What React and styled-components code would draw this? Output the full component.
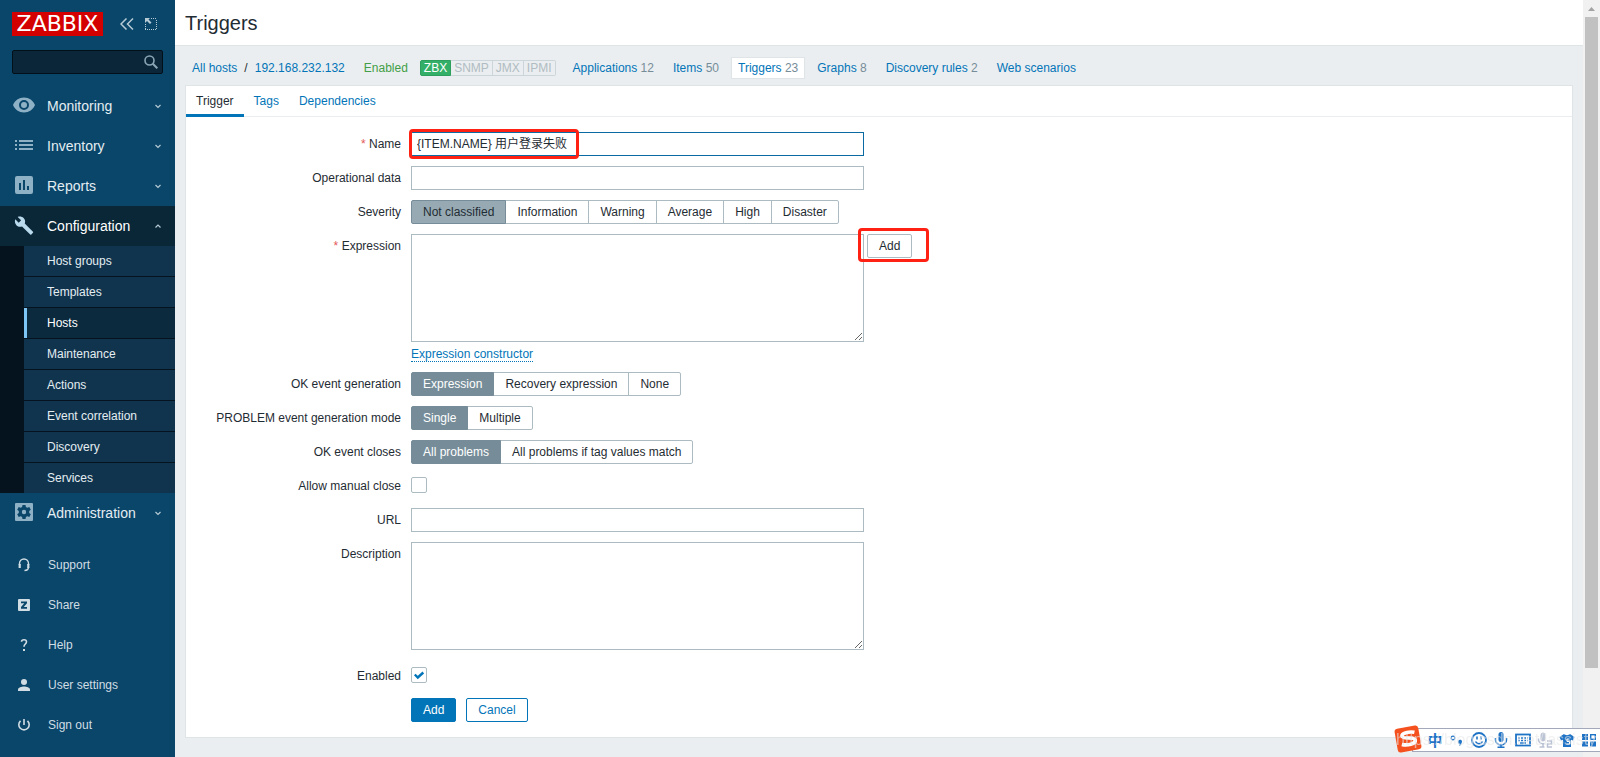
import React from 'react';
import styled, { createGlobalStyle, css } from 'styled-components';

const GlobalStyle = createGlobalStyle`
  * {
    box-sizing: border-box;
  }

  body {
    margin: 0;
    background: #ebeef0;
    color: #1f2c33;
    font: 12px/24px "Liberation Sans", "Noto Sans CJK SC", sans-serif;
  }

  ul {
    margin: 0;
    padding: 0;
    list-style: none;
  }

  a {
    color: #0275b8;
    text-decoration: none;
  }

  input, textarea, button {
    margin: 0;
    font: inherit;
    color: inherit;
  }

  svg {
    display: block;
  }
`;

const Page = styled.div`
  display: flex;
  min-height: 100vh;
`;

/* sidebar */

const Sidebar = styled.aside`
  flex: none;
  width: 175px;
  background: #0a466a;
`;

const LogoRow = styled.div`
  display: flex;
  align-items: center;
  padding: 12px 0 0 12px;
`;

const Logo = styled.a`
  width: 91px;
  height: 24px;
  background: #d40000;
  color: #fff;
  font: 22px/24px "DejaVu Sans", sans-serif;
  text-align: center;
`;

const IconButton = styled.button`
  margin-left: ${({ $gap }) => $gap}px;
  padding: 0;
  border: 0;
  background: none;
  color: #b7cbd6;
`;

const Search = styled.form`
  display: flex;
  align-items: center;
  height: 24px;
  margin: 14px 12px 12px;
  padding-right: 4px;
  border: 1px solid #02101a;
  border-radius: 2px;
  background: #0a2638;
  color: #8ba7b7;

  input {
    flex: 1;
    min-width: 0;
    border: 0;
    background: none;
    outline: 0;
  }
`;

const MenuLink = styled.a`
  display: flex;
  align-items: center;
  height: 40px;
  padding: 0 13px 0 12px;
  background: ${({ $open }) => ($open ? '#0a2738' : 'transparent')};
  color: ${({ $open }) => ($open ? '#fff' : '#e4edf2')};
  font-size: 14px;

  span {
    flex: 1;
    margin-left: 11px;
  }

  .icon {
    color: ${({ $open }) => ($open ? '#b9d9ec' : '#8fb1c6')};
  }
`;

const SubMenu = styled.ul`
  padding-left: 24px;
  background: #04131d;

  li + li {
    border-top: 1px solid #04131d;
  }
`;

const SubLink = styled.a`
  display: block;
  padding-left: 20px;
  border-left: 3px solid ${({ $active }) => ($active ? '#7cc5f5' : 'transparent')};
  background: ${({ $active }) => ($active ? '#0b2a3e' : '#10344e')};
  background-clip: ${({ $active }) => ($active ? 'padding-box' : 'border-box')};
  color: ${({ $active }) => ($active ? '#fff' : '#e4edf2')};
  line-height: 30px;
`;

const UserMenu = styled.ul`
  padding-top: 12px;
`;

const UserLink = styled.a`
  display: flex;
  align-items: center;
  height: 40px;
  padding-left: 15px;
  color: #d0dde4;

  svg {
    margin-right: 15px;
  }
`;

/* content */

const Content = styled.div`
  flex: 1;
  min-width: 0;
`;

const Header = styled.header`
  height: 46px;
  padding: 0 10px;
  border-bottom: 1px solid #dfe4e7;
  background: #fff;

  h1 {
    margin: 0;
    font-size: 20px;
    font-weight: normal;
    line-height: 46px;
  }
`;

const HostNav = styled.nav`
  display: flex;
  align-items: center;
  height: 39px;
  padding: 5px 17px 0;
  white-space: nowrap;
  line-height: 20px;
`;

const Crumb = styled.div`
  display: flex;
  gap: 7px;
  margin-right: 19px;
`;

const Status = styled.span`
  margin-right: 12px;
  color: #429e47;
`;

const Interfaces = styled.div`
  display: flex;
  margin-right: 10px;
  border-radius: 2px;
  line-height: 14px;

  span {
    padding: 0 3px;
    border: 1px solid #ccd5d9;
    color: #b0bcc2;
  }

  span + span {
    border-left-width: 0;
  }

  span:first-child {
    border-color: #2f9f5e;
    border-radius: 2px 0 0 2px;
    background: #34af67;
    color: #fff;
  }

  span:last-child {
    border-radius: 0 2px 2px 0;
  }
`;

const NavLink = styled.a`
  margin-right: 5px;
  padding: 0 6px;
  border: 1px solid ${({ $active }) => ($active ? '#dfe4e7' : 'transparent')};
  background: ${({ $active }) => ($active ? '#fff' : 'none')};

  sup {
    color: #768d99;
    font-size: 12px;
    line-height: 1;
    vertical-align: baseline;
  }
`;

const Panel = styled.main`
  margin: 0 10px;
  border: 1px solid #dfe4e7;
  background: #fff;
`;

const Tabs = styled.ul`
  display: flex;
  height: 31px;
  border-bottom: 1px solid #ebeef0;
`;

const Tab = styled.a`
  display: block;
  height: 31px;
  padding: 0 10px;
  border-bottom: 3px solid ${({ $active }) => ($active ? '#0275b8' : 'transparent')};
  color: ${({ $active }) => ($active ? '#1f2c33' : '#0275b8')};
  line-height: 30px;
`;

const Form = styled.form`
  display: flex;
  flex-direction: column;
  gap: 10px;
  padding: 15px 0;
`;

const FormRow = styled.div`
  display: flex;
  gap: 10px;
  min-height: 24px;
`;

const Label = styled.label`
  flex: none;
  width: 215px;
  text-align: right;

  &::before {
    content: ${({ $required }) => ($required ? '"* "' : 'none')};
    color: #e45959;
  }
`;

const Field = styled.div`
  position: relative;
  flex: 1;
  min-width: 0;
`;

const control = css`
  display: block;
  width: 453px;
  max-width: 100%;
  border: 1px solid #acbbc2;
  border-radius: 0;
  background: #fff;
  outline: 0;
`;

const TextInput = styled.input`
  ${control}
  height: 24px;
  padding: 0 5px;
  border-color: ${({ $focused }) => ($focused ? '#0a6aa1' : '#acbbc2')};
`;

const TextArea = styled.textarea`
  ${control}
  height: 108px;
  margin-bottom: 4px;
  padding: 4px 5px;
`;

const Split = styled.div`
  display: flex;
  align-items: flex-start;
  gap: 3px;
`;

const Button = styled.button`
  height: 24px;
  padding: 0 11px;
  border: 1px solid ${({ $kind }) => ($kind === 'plain' ? '#acbbc2' : '#0275b8')};
  border-radius: 2px;
  background: ${({ $kind }) => ($kind === 'primary' ? '#0275b8' : '#fff')};
  color: ${({ $kind }) => ({ plain: '#1f2c33', primary: '#fff', alt: '#0275b8' }[$kind])};
  line-height: 22px;
`;

const Actions = styled.div`
  display: flex;
  gap: 10px;
`;

const Constructor = styled.a`
  display: block;
  width: fit-content;
  height: 16px;
  border-bottom: 1px dotted #0275b8;
  line-height: 17px;
`;

const Segments = styled.ul`
  display: flex;

  li + li {
    margin-left: -1px;
  }

  input {
    position: absolute;
    opacity: 0;
  }

  span {
    display: block;
    height: 24px;
    padding: 0 11px;
    border: 1px solid #acbbc2;
    line-height: 22px;
    white-space: nowrap;
  }

  li:first-child span {
    border-radius: 2px 0 0 2px;
  }

  li:last-child span {
    border-radius: 0 2px 2px 0;
  }

  input:checked + span {
    position: relative;
    border-color: #768d99;
    background: ${({ $severity }) => ($severity ? '#97aab3' : '#768d99')};
    color: ${({ $severity }) => ($severity ? '#1f2c33' : '#fff')};
  }
`;

const CheckWrap = styled.span`
  display: grid;
  width: 16px;
  height: 24px;
  padding-top: 3px;
  align-content: start;

  input, svg {
    grid-area: 1 / 1;
  }

  input {
    appearance: none;
    width: 16px;
    height: 16px;
    border: 1px solid #acbbc2;
    border-radius: 2px;
    background: #fff;
  }

  svg {
    visibility: hidden;
    z-index: 1;
    pointer-events: none;
  }

  input:checked + svg {
    visibility: visible;
  }
`;

/* red marker drawn over a control */
const Marker = styled.span`
  position: absolute;
  top: ${({ $top }) => $top}px;
  left: ${({ $left }) => $left}px;
  width: ${({ $width }) => $width}px;
  height: ${({ $height }) => $height}px;
  border: 3px solid #ff2113;
  border-radius: 4px;
  pointer-events: none;
`;

const Anchor = styled.div`
  position: relative;
  display: flex;
`;

/* page scrollbar */

const ScrollTrack = styled.div`
  flex: none;
  display: flex;
  flex-direction: column;
  align-items: center;
  width: 17px;
  background: #f1f1f1;

  svg {
    flex: none;
  }
`;

const ScrollThumb = styled.div`
  width: 13px;
  height: 86%;
  background: #c1c1c1;
`;

/* input method bar */

const ImeBar = styled.div`
  position: fixed;
  right: 0;
  bottom: 5px;
  display: flex;
  align-items: center;
  gap: 6px;
  height: 24px;
  padding: 0 3px 0 14px;
  border: 1px solid #a3a9bb;
  border-right: 0;
  background: #fff;
  color: #1e73c6;
`;

const ImeLogo = styled.svg`
  position: absolute;
  left: -20px;
  bottom: -2px;
`;

const ImeText = styled.span`
  width: 16px;
  font: bold 15px/16px "Noto Sans CJK SC", sans-serif;
  text-align: center;
`;

const Watermark = styled.span`
  position: absolute;
  left: -17px;
  color: rgba(232, 232, 232, 0.6);
  font-size: 16px;
  white-space: nowrap;
`;

const MENU_ICONS = {
  eye: (
    <path
      fillRule="evenodd"
      d="M12 4.500C7 4.500 2.700 7.600 1 12c1.700 4.400 6 7.500 11 7.500s9.300-3.100 11-7.500C21.300 7.600 17 4.500 12 4.500zM12 17a5 5 0 1 1 0-10 5 5 0 0 1 0 10zm0-8a3 3 0 1 0 0 6 3 3 0 0 0 0-6z"
    />
  ),
  list: <path d="M3 7h2v2H3zm4 0h14v2H7zM3 11h2v2H3zm4 0h14v2H7zM3 15h2v2H3zm4 0h14v2H7z" />,
  chart: (
    <path
      fillRule="evenodd"
      d="M5 3h14a2 2 0 0 1 2 2v14a2 2 0 0 1-2 2H5a2 2 0 0 1-2-2V5a2 2 0 0 1 2-2zm2 7v7h2v-7zm4-3v10h2V7zm4 6v4h2v-4z"
    />
  ),
  wrench: (
    <path
      transform="translate(1 1) scale(.92)"
      d="M21.700 19.300l-8.900-8.900c.8-2 .4-4.400-1.300-6C9.800 2.600 7.200 2.300 5.100 3.200l3.700 3.700-2.600 2.600-3.700-3.700c-.9 2.100-.5 4.700 1.200 6.400 1.700 1.700 4 2.100 6.100 1.300l8.900 8.800c.3.300.9.300 1.200 0l1.800-1.800c.3-.3.300-.9 0-1.200z"
    />
  ),
  gear: (
    <path
      fillRule="evenodd"
      d="M4 3h16a1 1 0 0 1 1 1v16a1 1 0 0 1-1 1H4a1 1 0 0 1-1-1V4a1 1 0 0 1 1-1zm6.500 2l-.4 2-1.400.8-2-.7-1.500 2.600L6.800 11v2l-1.600 1.300 1.500 2.600 2-.7 1.400.8.4 2h3l.4-2 1.400-.8 2 .7 1.500-2.600-1.600-1.300v-2l1.600-1.300-1.500-2.600-2 .7-1.400-.8-.4-2zM12 9.800a2.200 2.200 0 1 1 0 4.400 2.200 2.200 0 0 1 0-4.400z"
    />
  ),
};

const USER_ICONS = {
  support: (
    <g fill="none" stroke="currentColor">
      <path d="M4.500 9V7.500a4.500 4.500 0 0 1 9 0V9" strokeWidth="1.400" />
      <path d="M4.700 8v4M13.300 8v4" strokeWidth="2.200" />
      <path d="M13.500 11c0 2.500-1.500 3.500-4 3.500" strokeWidth="1.400" />
    </g>
  ),
  share: (
    <>
      <rect x="3" y="3" width="12" height="12" rx="1" fill="currentColor" />
      <path d="M6 5.500h6v1.700L8.700 11H12v1.700H6V11l3.300-3.800H6z" fill="#0a466a" />
    </>
  ),
  help: (
    <>
      <path
        d="M6.500 5.800C6.600 4.300 7.600 3.700 9 3.700c1.500 0 2.500.8 2.500 2.100C11.500 8 9 8 9 10.700"
        fill="none"
        stroke="currentColor"
        strokeWidth="1.600"
      />
      <rect x="8" y="13" width="2" height="2" fill="currentColor" />
    </>
  ),
  user: (
    <g fill="currentColor">
      <circle cx="9" cy="6" r="3" />
      <path d="M3 15v-1.500C3 11.500 6.500 10.500 9 10.500s6 1 6 3V15z" />
    </g>
  ),
  power: (
    <g fill="none" stroke="currentColor" strokeWidth="1.600">
      <path d="M9 3v6M5.500 4.800a5.200 5.200 0 1 0 7 0" />
    </g>
  ),
};

const SUB_ITEMS = [
  'Host groups',
  'Templates',
  'Hosts',
  'Maintenance',
  'Actions',
  'Event correlation',
  'Discovery',
  'Services',
];

const MENU = [
  { label: 'Monitoring', icon: 'eye' },
  { label: 'Inventory', icon: 'list' },
  { label: 'Reports', icon: 'chart' },
  { label: 'Configuration', icon: 'wrench', items: SUB_ITEMS },
  { label: 'Administration', icon: 'gear' },
];

const USER_MENU = [
  { label: 'Support', icon: 'support' },
  { label: 'Share', icon: 'share' },
  { label: 'Help', icon: 'help' },
  { label: 'User settings', icon: 'user' },
  { label: 'Sign out', icon: 'power' },
];

const HOST_LINKS = [
  { label: 'Applications', count: 12 },
  { label: 'Items', count: 50 },
  { label: 'Triggers', count: 23 },
  { label: 'Graphs', count: 8 },
  { label: 'Discovery rules', count: 2 },
  { label: 'Web scenarios' },
];

function Chevron({ up }) {
  return (
    <svg width="8" height="6" viewBox="0 0 8 6" fill="none" stroke="#b7cbd6" strokeWidth="1.200">
      <path d={up ? 'M1.500 4.500L4 2l2.500 2.500' : 'M1.500 2L4 4.500 6.500 2'} />
    </svg>
  );
}

function SideMenu() {
  return (
    <Sidebar>
      <LogoRow>
        <Logo href="#">ZABBIX</Logo>
        <IconButton type="button" aria-label="Collapse sidebar" $gap={17}>
          <svg width="14" height="12" viewBox="0 0 14 12" fill="none" stroke="currentColor" strokeWidth="1.500">
            <path d="M6.500.5L1 6l5.500 5.500M13 .5L7.500 6l5.500 5.500" />
          </svg>
        </IconButton>
        <IconButton type="button" aria-label="Hide sidebar" $gap={11}>
          <svg width="12" height="12" viewBox="0 0 12 12">
            <path
              d="M6 .5h6M11.500 2v10M0 11.500h11M.5 6v5"
              fill="none"
              stroke="currentColor"
              strokeDasharray="1 1"
            />
            <path d="M0 0h5L3.500 1.500l3 3-1.500 1.500-3-3L0 5z" fill="currentColor" />
          </svg>
        </IconButton>
      </LogoRow>
      <Search>
        <input type="text" aria-label="Search" />
        <svg width="14" height="14" viewBox="0 0 14 14" fill="none" stroke="currentColor">
          <circle cx="5.500" cy="5.500" r="4.500" strokeWidth="1.600" />
          <path d="M8.800 8.800l4.500 4.500" strokeWidth="2" />
        </svg>
      </Search>
      <nav>
        {MENU.map(({ label, icon, items }) => (
          <React.Fragment key={label}>
            <MenuLink href="#" $open={!!items}>
              <svg className="icon" width="24" height="24" viewBox="0 1 24 24" fill="currentColor">
                {MENU_ICONS[icon]}
              </svg>
              <span>{label}</span>
              <Chevron up={!!items} />
            </MenuLink>
            {items && (
              <SubMenu>
                {items.map((item) => (
                  <li key={item}>
                    <SubLink href="#" $active={item === 'Hosts'}>{item}</SubLink>
                  </li>
                ))}
              </SubMenu>
            )}
          </React.Fragment>
        ))}
      </nav>
      <UserMenu>
        {USER_MENU.map(({ label, icon }) => (
          <li key={label}>
            <UserLink href="#">
              <svg width="18" height="18" viewBox="0 0 18 18">{USER_ICONS[icon]}</svg>
              {label}
            </UserLink>
          </li>
        ))}
      </UserMenu>
    </Sidebar>
  );
}

function RadioRow({ label, name, options, severity }) {
  return (
    <FormRow role="radiogroup" aria-labelledby={`${name}-label`}>
      <Label as="span" id={`${name}-label`}>{label}</Label>
      <Field>
        <Segments $severity={severity}>
          {options.map((option, i) => (
            <li key={option}>
              <label>
                <input type="radio" name={name} defaultChecked={i === 0} />
                <span>{option}</span>
              </label>
            </li>
          ))}
        </Segments>
      </Field>
    </FormRow>
  );
}

function CheckBox({ id, checked }) {
  return (
    <CheckWrap>
      <input type="checkbox" id={id} defaultChecked={checked} />
      <svg width="16" height="16" viewBox="0 0 16 16" fill="none" stroke="#0275b8" strokeWidth="2.400">
        <path d="M3.800 7.500l3 3L12.300 5.500" />
      </svg>
    </CheckWrap>
  );
}

function TriggerForm() {
  return (
    <Form>
      <FormRow>
        <Label htmlFor="name" $required>Name</Label>
        <Field>
          <TextInput id="name" defaultValue="{ITEM.NAME} 用户登录失败" $focused />
          <Marker $top={-3} $left={-2} $width={170} $height={30} />
        </Field>
      </FormRow>
      <FormRow>
        <Label htmlFor="opdata">Operational data</Label>
        <Field>
          <TextInput id="opdata" />
        </Field>
      </FormRow>
      <RadioRow
        label="Severity"
        name="severity"
        options={['Not classified', 'Information', 'Warning', 'Average', 'High', 'Disaster']}
        severity
      />
      <FormRow>
        <Label htmlFor="expression" $required>Expression</Label>
        <Field>
          <Split>
            <TextArea id="expression" />
            <Anchor>
              <Button type="button" $kind="plain">Add</Button>
              <Marker $top={-6} $left={-9} $width={71} $height={34} />
            </Anchor>
          </Split>
          <Constructor href="#">Expression constructor</Constructor>
        </Field>
      </FormRow>
      <RadioRow
        label="OK event generation"
        name="recovery"
        options={['Expression', 'Recovery expression', 'None']}
      />
      <RadioRow label="PROBLEM event generation mode" name="mode" options={['Single', 'Multiple']} />
      <RadioRow
        label="OK event closes"
        name="correlation"
        options={['All problems', 'All problems if tag values match']}
      />
      <FormRow>
        <Label htmlFor="manual">Allow manual close</Label>
        <Field>
          <CheckBox id="manual" />
        </Field>
      </FormRow>
      <FormRow>
        <Label htmlFor="url">URL</Label>
        <Field>
          <TextInput id="url" />
        </Field>
      </FormRow>
      <FormRow>
        <Label htmlFor="description">Description</Label>
        <Field>
          <TextArea id="description" />
        </Field>
      </FormRow>
      <FormRow>
        <Label htmlFor="enabled">Enabled</Label>
        <Field>
          <CheckBox id="enabled" checked />
        </Field>
      </FormRow>
      <FormRow>
        <Label as="span" />
        <Actions>
          <Button type="button" $kind="primary">Add</Button>
          <Button type="button" $kind="alt">Cancel</Button>
        </Actions>
      </FormRow>
    </Form>
  );
}

function InputMethodBar() {
  return (
    <ImeBar>
      <ImeText>中</ImeText>
      <svg width="16" height="16" viewBox="0 0 16 16">
        <circle cx="4" cy="6" r="1.800" fill="none" stroke="currentColor" strokeWidth="1.300" />
        <path d="M9 9.500a2 2 0 1 1 3.500 1.500c0 1.500-1 2.500-2.500 3 .8-1 .8-1.500.5-2A2 2 0 0 1 9 9.500z" fill="currentColor" />
      </svg>
      <svg width="16" height="16" viewBox="0 0 16 16" fill="none" stroke="currentColor">
        <circle cx="8" cy="8" r="7" strokeWidth="1.800" />
        <path d="M4.500 9.500c1.500 3 5.500 3 7 0M6 4.500v3M10 4.500v3" strokeWidth="1.600" />
      </svg>
      <svg width="16" height="16" viewBox="0 0 16 16">
        <rect x="5.500" y="0" width="5" height="10" rx="2.500" fill="currentColor" />
        <path d="M2.500 6v2a5.500 5 0 0 0 11 0V6M8 13v3M4.500 15.200h7" fill="none" stroke="currentColor" strokeWidth="1.500" />
      </svg>
      <svg width="16" height="16" viewBox="0 0 16 16" fill="none" stroke="currentColor">
        <rect x="1" y="2.500" width="14" height="11" strokeWidth="1.800" />
        <path d="M3 6h10M3 8.500h10" strokeDasharray="2 1" strokeWidth="1.600" />
        <path d="M5 11h6" strokeWidth="1.400" />
      </svg>
      <svg width="16" height="16" viewBox="0 0 16 16" fill="none" stroke="#b9c1d4">
        <rect x="4" y="1" width="4" height="8" rx="2" fill="#b9c1d4" />
        <path d="M1.500 6.500v1.500a4.500 4 0 0 0 6 3.500M6 12v3M2.500 15h5" strokeWidth="1.500" />
        <path d="M10 9h4.500v3H10.500v3H15" strokeWidth="1.500" />
      </svg>
      <svg width="16" height="16" viewBox="0 0 16 16">
        <path d="M5 2c1 1.500 5 1.500 6 0l4.500 3L14 8.500l-2-.8V15H4V7.700l-2 .8L.5 5z" fill="currentColor" />
        <path d="M10.500 7H8v2.500h2.500V12H7.500" fill="none" stroke="#fff" />
      </svg>
      <svg width="16" height="16" viewBox="0 0 16 16" fill="currentColor">
        <rect x="1" y="2" width="6" height="6" />
        <rect x="9.700" y="2.700" width="4.600" height="4.600" fill="none" stroke="currentColor" strokeWidth="1.400" />
        <rect x="1" y="9.500" width="6" height="5" />
        <rect x="9" y="9.500" width="6" height="5" />
      </svg>
      <ImeLogo width="30" height="28" viewBox="0 0 30 28">
        <g transform="rotate(-10 15 14)">
          <rect x="3" y="2" width="24" height="24" rx="3" fill="#f4511e" />
          <path
            d="M22.500 8.500c-5-2-13-1.500-13 1.800 0 3.400 12.500 2.200 12.500 6 0 4-9 4.200-14 2"
            fill="none"
            stroke="#fff"
            strokeWidth="3.600"
          />
        </g>
      </ImeLogo>
      <Watermark>https://blog.csdn.net/lassisty</Watermark>
    </ImeBar>
  );
}

function App() {
  return (
    <>
      <GlobalStyle />
      <Page>
        <SideMenu />
        <Content>
          <Header>
            <h1>Triggers</h1>
          </Header>
          <HostNav>
            <Crumb>
              <a href="#">All hosts</a>
              <span>/</span>
              <a href="#">192.168.232.132</a>
            </Crumb>
            <Status>Enabled</Status>
            <Interfaces>
              <span>ZBX</span>
              <span>SNMP</span>
              <span>JMX</span>
              <span>IPMI</span>
            </Interfaces>
            {HOST_LINKS.map(({ label, count }) => (
              <NavLink key={label} href="#" $active={label === 'Triggers'}>
                {label}
                {count && <sup> {count}</sup>}
              </NavLink>
            ))}
          </HostNav>
          <Panel>
            <Tabs>
              <li><Tab href="#" $active>Trigger</Tab></li>
              <li><Tab href="#">Tags</Tab></li>
              <li><Tab href="#">Dependencies</Tab></li>
            </Tabs>
            <TriggerForm />
          </Panel>
        </Content>
        <ScrollTrack>
          <svg width="17" height="17" viewBox="0 0 17 17">
            <path d="M5 11l3.500-4 3.500 4z" fill="#a3a3a3" />
          </svg>
          <ScrollThumb />
        </ScrollTrack>
      </Page>
      <InputMethodBar />
    </>
  );
}

export default App;
